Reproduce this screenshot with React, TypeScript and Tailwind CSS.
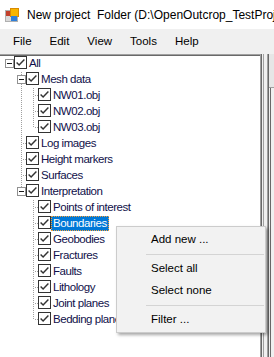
import React from "react";

type Row = {
  label: string;
  level: number;
  expander?: boolean;
  last?: boolean;
  ancestorsMore?: boolean[];
  selected?: boolean;
};

const rows: Row[] = [
  { label: "All", level: 0, expander: true, last: true },
  { label: "Mesh data", level: 1, expander: true },
  { label: "NW01.obj", level: 2, ancestorsMore: [true] },
  { label: "NW02.obj", level: 2, ancestorsMore: [true] },
  { label: "NW03.obj", level: 2, last: true, ancestorsMore: [true] },
  { label: "Log images", level: 1 },
  { label: "Height markers", level: 1 },
  { label: "Surfaces", level: 1 },
  { label: "Interpretation", level: 1, expander: true, last: true },
  { label: "Points of interest", level: 2, ancestorsMore: [false] },
  { label: "Boundaries", level: 2, ancestorsMore: [false], selected: true },
  { label: "Geobodies", level: 2, ancestorsMore: [false] },
  { label: "Fractures", level: 2, ancestorsMore: [false] },
  { label: "Faults", level: 2, ancestorsMore: [false] },
  { label: "Lithology", level: 2, ancestorsMore: [false] },
  { label: "Joint planes", level: 2, ancestorsMore: [false] },
  { label: "Bedding planes", level: 2, last: true, ancestorsMore: [false] },
];

const DOT = "#a0a0a0";

function Guides({ row }: { row: Row }) {
  const w = 14 + 12 * row.level;
  const lx = (k: number) => 9 + 12 * k + 0.5;
  const els: React.ReactNode[] = [];
  (row.ancestorsMore || []).forEach((more, i) => {
    const k = i + 1;
    if (more) {
      els.push(
        <line key={"a" + k} x1={lx(k)} y1={0} x2={lx(k)} y2={16} stroke={DOT} strokeDasharray="1 1" />
      );
    }
  });
  if (row.level > 0) {
    const x = lx(row.level);
    els.push(
      <line
        key="v"
        x1={x}
        y1={0}
        x2={x}
        y2={row.last ? 7.5 : 16}
        stroke={DOT}
        strokeDasharray="1 1"
      />
    );
    if (!row.expander) {
      els.push(
        <line key="h" x1={x + 1} y1={7.5} x2={w} y2={7.5} stroke={DOT} strokeDasharray="1 1" />
      );
    }
  }
  if (row.expander) {
    const bx = 5 + 12 * row.level;
    els.push(
      <g key="e">
        <rect x={bx + 0.5} y={3.5} width={8} height={8} fill="#fff" stroke="#919191" />
        <line x1={bx + 2} y1={7.5} x2={bx + 7} y2={7.5} stroke="#1a1a1a" />
      </g>
    );
  }
  return (
    <svg width={w} height={16} className="shrink-0" shapeRendering="crispEdges">
      {els}
    </svg>
  );
}

function CheckBox() {
  return (
    <svg width={13} height={13} className="shrink-0" viewBox="0 0 13 13">
      <rect x={0.5} y={0.5} width={12} height={12} fill="#fff" stroke="#333" shapeRendering="crispEdges" />
      <path d="M2.6 6.4 L5.1 8.9 L10.4 3.4" fill="none" stroke="#333" strokeWidth={1.45} />
    </svg>
  );
}

function TreeRow({ row }: { row: Row }) {
  return (
    <div className="flex h-[16px] items-start">
      <Guides row={row} />
      <CheckBox />
      <span
        className={
          row.selected
            ? "h-[15px] whitespace-nowrap bg-[#0078d7] px-[2px] leading-[15px] text-white outline-1 -outline-offset-1 outline-dotted outline-[#f7a13a]"
            : "h-[15px] whitespace-nowrap px-[2px] leading-[15px] text-[#10104a]"
        }
      >
        {row.label}
      </span>
    </div>
  );
}

function AppIcon() {
  return (
    <svg width={15} height={14} viewBox="0 0 15 14" className="shrink-0">
      <rect x={0.5} y={2.5} width={12} height={11} fill="#d9d9d9" stroke="#b0b0b0" />
      <rect x={1} y={3} width={5} height={5} fill="#c2402b" />
      <rect x={5.5} y={0.5} width={8} height={8} fill="#f7b500" stroke="#d98a00" />
      <rect x={6} y={8} width={6} height={5} fill="#2f7fd8" />
    </svg>
  );
}

function MenuItem({ children }: { children: React.ReactNode }) {
  return <div className="flex h-[22px] items-center pl-[34px]">{children}</div>;
}

function Sep() {
  return (
    <div className="flex h-[7px] items-center pl-[29px] pr-[1px]">
      <div className="h-px w-full bg-[#d4d4d4]" />
    </div>
  );
}

export default function App() {
  return (
    <div
      className="relative flex h-[357px] w-[274px] flex-col overflow-hidden bg-[#f0f0f0] text-black"
      style={{ fontFamily: '"Liberation Sans", Arial, sans-serif' }}
    >
      {/* title bar */}
      <div className="flex h-[29px] shrink-0 items-center overflow-hidden bg-white pl-[5px] pt-[1px]">
        <AppIcon />
        <span className="ml-[7px] whitespace-nowrap text-[12px]">New project&nbsp;&nbsp;Folder (D:\OpenOutcrop_TestProj</span>
      </div>
      {/* menu bar */}
      <div className="flex h-[25px] shrink-0 items-center pl-[4px] text-[11.5px]">
        {["File", "Edit", "View", "Tools", "Help"].map((m) => (
          <div key={m} className="px-[9px]">
            {m}
          </div>
        ))}
      </div>
      {/* body */}
      <div className="flex flex-1">
        <div className="flex w-[260px] flex-col border-t border-[#a0a0a0] bg-white">
          <div className="flex flex-1 flex-col border-t border-[#696969] text-[11.5px] tracking-[-0.45px]">
            {rows.map((r) => (
              <TreeRow key={r.label} row={r} />
            ))}
          </div>
        </div>
        <div className="flex">
          <div className="w-px bg-[#a0a0a0]" />
          <div className="w-px bg-[#696969]" />
          <div className="w-px bg-[#f0f0f0]" />
          <div className="w-px bg-[#a0a0a0]" />
          <div className="w-[3px] bg-[#f0f0f0]" />
          <div className="w-px bg-[#a0a0a0]" />
          <div className="w-px bg-[#696969]" />
          <div className="flex w-[5px] flex-col">
            <div className="h-[34px] border-b border-[#a0a0a0] bg-[#e6e6e6]" />
            <div className="flex flex-1">
              <div className="w-px bg-[#f0f0f0]" />
              <div className="w-px bg-[#696969]" />
              <div className="flex-1 bg-[#f0f0f0]" />
            </div>
          </div>
        </div>
      </div>

      {/* context menu */}
      <div className="absolute left-[116px] top-[226px] w-[150px] border border-[#cccccc] bg-[#f2f2f2] pt-[2px] pb-[1px] text-[11.5px] shadow-[2px_2px_3px_rgba(0,0,0,0.35)]">
        <MenuItem>Add new ...</MenuItem>
        <Sep />
        <MenuItem>Select all</MenuItem>
        <MenuItem>Select none</MenuItem>
        <Sep />
        <MenuItem>Filter ...</MenuItem>
      </div>
    </div>
  );
}
